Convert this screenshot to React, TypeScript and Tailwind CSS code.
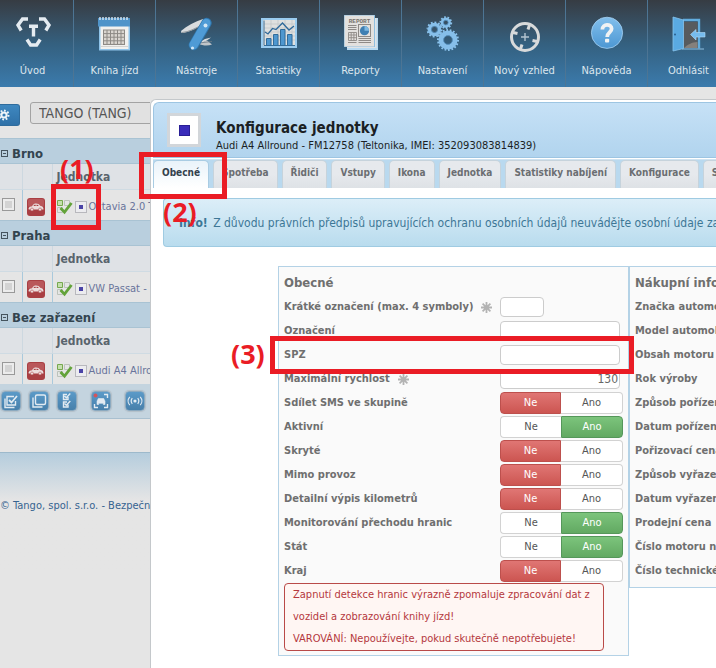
import React, { useState } from 'react';
import clsx from 'clsx';

//////////////////////////////////////////////////////
// NAV ICONS
//////////////////////////////////////////////////////

const NavSvg: React.FC<{ children: React.ReactNode }> = ({ children }) => (
  <svg width="40" height="40" viewBox="0 0 40 40" fill="none" aria-hidden="true">
    {children}
  </svg>
);

const HomeIcon = () => (
  <NavSvg>
    <g stroke="#e4ebf1" strokeWidth="3.4">
      <path d="M15 7H9.5L5 13.2L8.2 18.5" />
      <path d="M26 7H31.5L36 13.2L32.8 18.5" />
      <path d="M16 14.3H25M20.5 14V24.5" />
      <path d="M14 27.5L17.6 33H23.6L27.2 27.5" />
    </g>
  </NavSvg>
);

const CalendarIcon = () => (
  <NavSvg>
    <rect x="4" y="13" width="31" height="25.5" fill="#8fc4ea" />
    <rect x="5.5" y="14" width="28" height="23" fill="#f1f1ee" />
    <path d="M6 34.5H33" stroke="#d3d3d0" />
    <rect x="3" y="6" width="32" height="8.5" fill="#4f94c9" />
    <path d="M5 5V8M8 5V8M11 5V8M14 5V8M17 5V8M20 5V8M23 5V8M26 5V8M29 5V8M32 5V8" stroke="#d7e8f5" strokeWidth="1.4" />
    <rect x="8" y="17.5" width="22" height="15.5" fill="#8d8a85" />
    <g fill="#dad6d0">
      {[0, 1, 2, 3].map((r) =>
        [0, 1, 2, 3, 4, 5].map((c) => (
          <rect key={`${r}-${c}`} x={9 + c * 3.5} y={18.5 + r * 3.6} width="2.5" height="2.6" />
        )),
      )}
    </g>
  </NavSvg>
);

const KnifeIcon = () => (
  <NavSvg>
    <path d="M26 7C18 9.5 10 13.5 4 19L4.5 21C12 20.5 18 17 25 13Z" fill="#d9dcde" />
    <path d="M5 20.5C12 20 18 16.5 25 13" stroke="#8f979d" />
    <path d="M21 31C26 31 30 29 34 25.5L28 27Z" fill="#d5d9dc" />
    <path d="M21 31.5C26 34 31 34 35 32.5L30 28.5Z" fill="#bfc5c9" />
    <path d="M22 31L35 29.5" stroke="#6c7a85" strokeWidth=".8" />
    <path d="M16.8 33L29.5 11" stroke="#2f76ad" strokeWidth="10.4" strokeLinecap="round" />
    <path d="M16.6 33L29.3 11" stroke="#4f9bd6" strokeWidth="8.6" strokeLinecap="round" />
    <circle cx="28.5" cy="13.5" r="2" fill="#d3e7f5" />
    <circle cx="15.5" cy="36" r="1.6" fill="#d3e7f5" />
  </NavSvg>
);

const ChartIcon = () => (
  <NavSvg>
    <rect x="2" y="6" width="36" height="30" fill="#9accf0" />
    <rect x="4" y="8" width="32" height="26" fill="#dfe0df" />
    <path d="M5 12H36M5 16H36M5 20H36M5 24H36M5 28H36M12 8V34M19 8V34M26 8V34M33 8V34" stroke="#bfc3c5" strokeWidth=".7" />
    <path d="M5 8.5V33.5H36" stroke="#3d6f96" />
    <g fill="#4e97cf" stroke="#316c9b">
      <path d="M7.5 26.5H12V33.5H7.5ZM14.5 22.5H19V33.5H14.5ZM21.5 17.5H26V33.5H21.5ZM28.5 22.5H33V33.5H28.5Z" />
    </g>
    <path d="M6 20L9 22L13.5 16.5L17 17.5L23.5 11L30 18L35 14" stroke="#2f699a" strokeWidth="1.3" />
  </NavSvg>
);

const ReportIcon = () => (
  <NavSvg>
    <rect x="6" y="6" width="31" height="32" fill="#b7daf2" />
    <rect x="6" y="6" width="29.5" height="30" fill="#dfe3e6" />
    <rect x="3" y="3" width="31" height="32" fill="#8fbfe0" />
    <rect x="3.5" y="3.5" width="29.5" height="31" fill="#e3e1de" />
    <text x="18.5" y="10.5" textAnchor="middle" fontSize="6" fontWeight="bold" fill="#77736e" fontFamily="Liberation Mono, monospace">
      REPORT
    </text>
    <path d="M7 13.5H15.5M7 15.5H15.5M7 17.5H15.5M17.5 26.5H30M17.5 28.5H30M17.5 30.5H30M7 30.5H15.5" stroke="#8e8a86" />
    <rect x="17.5" y="12.5" width="12" height="12" stroke="#8e8a86" />
    <circle cx="23.5" cy="18.7" r="4.6" fill="#3f7fb2" />
    <path d="M23.5 18.7V14.1A4.6 4.6 0 0 1 28.1 18.7Z" fill="#7db8e2" />
    <path d="M7.5 20.5H15.5V28.5H7.5ZM7.5 23H15.5M7.5 25.7H15.5M10.2 20.5V28.5M12.9 20.5V28.5" stroke="#8e8a86" strokeWidth=".9" />
  </NavSvg>
);

const Gear: React.FC<{ x: number; y: number; r: number; teeth: number }> = ({ x, y, r, teeth }) => (
  <g>
    <circle cx={x} cy={y} r={r} stroke="#8cc4ee" strokeWidth="2" pathLength={teeth * 2} strokeDasharray="1 1" />
    <circle cx={x} cy={y} r={r * 0.7} stroke="#86bfea" strokeWidth={r * 0.5} />
    <circle cx={x} cy={y} r={r * 0.44} stroke="#5591bf" strokeWidth=".8" />
  </g>
);

const GearsIcon = () => (
  <NavSvg>
    <Gear x={11.5} y={17.5} r={7} teeth={12} />
    <Gear x={22.8} y={10.6} r={5.4} teeth={10} />
    <Gear x={25} y={28} r={10} teeth={18} />
  </NavSvg>
);

const TargetIcon = () => (
  <NavSvg>
    <circle cx="20" cy="25" r="13.5" stroke="#d8dadb" strokeWidth="3" />
    <path d="M8 20.5L12.5 21.5M24.5 13L23 17.5M32 29.5L27.5 28.5M15.5 37L17 32.5" stroke="#d8dadb" strokeWidth="3" />
    <path d="M16 25H24M20 21V29" stroke="#b4c4d0" strokeWidth="1.4" />
  </NavSvg>
);

const HelpIcon = () => (
  <NavSvg>
    <defs>
      <linearGradient id="help-fill" x1="0" y1="0" x2="0" y2="1">
        <stop offset="0" stopColor="#82bfec" />
        <stop offset="1" stopColor="#4c97d3" />
      </linearGradient>
    </defs>
    <circle cx="20" cy="20.8" r="15.6" fill="url(#help-fill)" stroke="#a4d1f2" strokeWidth=".8" />
    <path d="M15.4 17.5C15.4 11.5 24.6 11.5 24.6 16.8C24.6 20.6 20.2 20.4 20.2 25" stroke="#f0f2f3" strokeWidth="3.8" />
    <rect x="18" y="26.8" width="4.2" height="3.8" rx="1" fill="#f0f2f3" />
  </NavSvg>
);

const DoorIcon = () => (
  <NavSvg>
    <path d="M14 8H30V36.5" stroke="#62addf" strokeWidth="2.4" />
    <rect x="14" y="10" width="14.5" height="26" fill="#575b5f" />
    <path d="M15 36H28.5V30C23 30 18 33 15 36Z" fill="#85807c" />
    <path d="M13 37H35" stroke="#8fbfe0" />
    <path d="M4 5L14.5 8V36.5L4 39Z" fill="#5aaae2" stroke="#86c4ee" strokeWidth=".8" />
    <circle cx="6" cy="22.5" r="1" fill="#2a6190" />
    <path d="M21.5 22.5L27 17.5V20.5H36V25H27V28Z" fill="#76bcee" stroke="#b2dcf8" strokeWidth=".6" />
  </NavSvg>
);

const navItems = [
  { title: 'Úvod', Icon: HomeIcon },
  { title: 'Kniha jízd', Icon: CalendarIcon },
  { title: 'Nástroje', Icon: KnifeIcon },
  { title: 'Statistiky', Icon: ChartIcon },
  { title: 'Reporty', Icon: ReportIcon },
  { title: 'Nastavení', Icon: GearsIcon },
  { title: 'Nový vzhled', Icon: TargetIcon },
  { title: 'Nápověda', Icon: HelpIcon },
  { title: 'Odhlásit', Icon: DoorIcon },
];

const TopNav = () => (
  <nav className="overflow-hidden bg-linear-to-b from-[#363c43] via-[#34607f] to-[#3b7bad]">
    <ul className="-ml-2 flex">
      {navItems.map(({ title, Icon }) => (
        <li key={title} className="w-[82px] shrink-0 border-r border-[#4d7594]">
          <a href="#" className="flex flex-col items-center pt-3 pb-2 text-[11px] leading-4 whitespace-nowrap text-[#dce6ee]">
            <Icon />
            <span className="mt-[11px]">{title}</span>
          </a>
        </li>
      ))}
    </ul>
  </nav>
);

//////////////////////////////////////////////////////
// SIDEBAR
//////////////////////////////////////////////////////

const groups = [
  { name: 'Brno', unit: 'Octavia 2.0 TDI' },
  { name: 'Praha', unit: 'VW Passat - BUS' },
  { name: 'Bez zařazení', unit: 'Audi A4 Allround' },
];

const CarBadge = () => (
  <svg width="18" height="18" viewBox="0 0 18 18" className="block" aria-hidden="true">
    <rect width="18" height="18" rx="3" fill="#a93f43" />
    <rect x="1" y="1" width="16" height="8" rx="2" fill="#b9575a" />
    <path d="M1.5 10.8C1.8 8.6 4 8.6 5 8.2C6.5 6 7.5 5.5 9 5.5C11 5.5 12.3 6.3 13.5 8C15 8.2 16.6 8.6 16.5 11.6H1.8Z" fill="#ecdcdc" />
    <path d="M6.4 8L7.5 6.7H8.7V8ZM9.5 6.7C10.6 6.7 11.2 7.2 11.8 8H9.5Z" fill="#a93f43" />
    <circle cx="5" cy="11.5" r="1.5" fill="#ecdcdc" stroke="#a93f43" strokeWidth=".5" />
    <circle cx="13" cy="11.5" r="1.5" fill="#ecdcdc" stroke="#a93f43" strokeWidth=".5" />
  </svg>
);

const CheckGrid = () => (
  <svg width="16" height="16" viewBox="0 0 16 16" className="shrink-0" fill="none" aria-hidden="true">
    <path d="M.5 1.5H5.5V6.5H.5Z" fill="#c5dfae" stroke="#76a84e" />
    <path d="M7.5 1.5H12.5V6.5H7.5ZM.5 8.5H5.5V13.5H.5Z" stroke="#bcc3bb" />
    <path d="M3.5 9L7.5 13.2L14.5 4" stroke="#63a33a" strokeWidth="2.8" />
  </svg>
);

const UnitMarker = () => (
  <span className="flex size-3 shrink-0 items-center justify-center border border-[#b8b8bd] bg-[#ececef]">
    <span className="size-1 bg-[#4a43a6]" />
  </span>
);

const UnitGroup: React.FC<{ name: string; unit: string }> = ({ name, unit }) => (
  <section>
    <h2 className="flex h-[26px] items-center gap-1 border-y border-[#a9c3d3] bg-[#b9cfde] pt-1.5 text-[13px] font-bold text-[#33444f]">
      <button aria-label={`Sbalit ${name}`} className="mb-0.5 ml-px flex size-[7px] items-center justify-center border border-[#45545e]">
        <span className="h-px w-[3px] bg-[#45545e]" />
      </button>
      {name}
    </h2>
    <table className="w-full table-fixed border-collapse text-left text-[11px]">
      <thead>
        <tr className="h-[25px] bg-[#dfe2e6] text-[12px] text-[#59646d]">
          <th className="w-[22px] border-r border-[#cdd8e0]" />
          <th className="w-[30px] border-r border-[#cdd8e0]" />
          <th className="p-0 pt-0.5 pl-1 font-bold">Jednotka</th>
        </tr>
      </thead>
      <tbody>
        <tr className="h-[31px] border-t border-[#cfdbe3] text-[#69749b]">
          <td className="border-r border-[#a9c9dc] p-0">
            <input
              type="checkbox"
              aria-label={unit}
              className="ml-0.5 block size-[13px] appearance-none border border-[#999] bg-[#d3d3d3] shadow-[inset_0_0_0_2px_#ececec] checked:bg-[#4a43a6]"
            />
          </td>
          <td className="border-r border-[#a9c9dc] p-0 pt-1 pl-1">
            <CarBadge />
          </td>
          <td className="p-0 pt-1 pl-1">
            <a href="#" className="flex items-center gap-0.5 whitespace-nowrap">
              <CheckGrid />
              <UnitMarker />
              {unit}
            </a>
          </td>
        </tr>
      </tbody>
    </table>
  </section>
);

const ToolButton: React.FC<{ label: string; children: React.ReactNode }> = ({ label, children }) => (
  <button
    aria-label={label}
    className="flex size-5 items-center justify-center rounded-[4px] border border-[#8ba9bf] bg-linear-to-b from-[#5b9ac8] to-[#4780ab] shadow-[0_0_1px_1px_#b3bfc8]">
    <svg width="18" height="18" viewBox="0 0 18 18" fill="none" stroke="#e2ebf2" strokeWidth="1.4" aria-hidden="true">
      {children}
    </svg>
  </button>
);

const Toolbar = () => (
  <div className="flex h-[35px] items-center border-b border-[#a9c0d0] bg-[#c4d4df]">
    <div className="ml-px flex gap-2">
      <ToolButton label="Vybrat vše">
        <path d="M13.5 9V13H5V4.5H12M3 6.5V15.5H12.5" />
        <path d="M7 8L9.5 10.5L15 4" strokeWidth="1.8" />
      </ToolButton>
      <ToolButton label="Zrušit výběr">
        <rect x="5.5" y="3" width="10" height="9.5" rx="1.5" />
        <path d="M3 5.5V15H12.5" />
      </ToolButton>
      <ToolButton label="Obrátit výběr">
        <path d="M10 5V7.5H5.5V2.5H9M10 12.5V15H5.5V10H9M6.5 4L8.3 5.8L12.3 1.5M6.5 11.5L8.3 13.3L12.3 9" />
      </ToolButton>
    </div>
    <div className="ml-3.5 flex gap-3.5">
      <ToolButton label="Sledovat vozidlo">
        <path d="M12 2.5H15.5V6M15.5 12V15.5H12M6 15.5H2.5V12" />
        <path d="M5 12.5V9.2L6.3 6.5H11.7L13 9.2V12.5H11.3V11.3H6.7V12.5ZM5.5 9.2H12.5" fill="#e2ebf2" strokeWidth=".6" />
        <circle cx="3.5" cy="3.5" r="2" fill="#d2555b" stroke="none" />
      </ToolButton>
      <ToolButton label="Signál">
        <circle cx="9" cy="9" r="1.6" fill="#e2ebf2" stroke="none" />
        <path d="M6.3 6.2C5 7.8 5 10.2 6.3 11.8M11.7 6.2C13 7.8 13 10.2 11.7 11.8M3.8 4.8C1.6 7.2 1.6 10.8 3.8 13.2M14.2 4.8C16.4 7.2 16.4 10.8 14.2 13.2" strokeWidth="1.2" />
      </ToolButton>
    </div>
  </div>
);

const Sidebar = () => (
  <aside className="w-[150px] shrink-0 overflow-hidden">
    <div className="flex h-[51px] items-start pt-[15px]">
      <button aria-label="Nastavení seznamu" className="mt-0.5 h-[22px] w-5 shrink-0 rounded-r-[3px] border border-l-0 border-[#2f6c9d] bg-linear-to-b from-[#3f88c0] to-[#2f71a8]">
        <svg width="12" height="12" viewBox="0 0 12 12" className="-ml-0.5" fill="none" stroke="#eef4f8" aria-hidden="true">
          <circle cx="6" cy="6" r="2.6" strokeWidth="2" />
          <circle cx="6" cy="6" r="4.5" strokeWidth="2" pathLength={32} strokeDasharray="2 2" />
        </svg>
      </button>
      <select
        aria-label="Skupina"
        className="ml-2.5 h-[22px] w-40 shrink-0 appearance-none rounded-[3px] border border-[#a3a3a3] bg-[#e1e1e1] pl-2 text-[14px] leading-5 text-[#555]">
        <option>TANGO (TANG)</option>
      </select>
    </div>
    {groups.map((group) => (
      <UnitGroup key={group.name} {...group} />
    ))}
    <Toolbar />
    <footer className="mt-[33px] h-[120px] border-t border-[#9db9cb] bg-linear-to-b from-[#b5cddd] to-[#e5e5e5] to-40% pt-[45px] text-[11px] leading-4 whitespace-nowrap text-[#366390]">
      © Tango, spol. s.r.o. - Bezpečnost
    </footer>
  </aside>
);

//////////////////////////////////////////////////////
// UNIT CONFIGURATION
//////////////////////////////////////////////////////

const tabs = ['Obecné', 'Spotřeba', 'Řidiči', 'Vstupy', 'Ikona', 'Jednotka', 'Statistiky nabíjení', 'Konfigurace', 'Servis'];

type Field = { label: string; required?: boolean } & (
  | { kind: 'text'; value?: string; short?: boolean }
  | { kind: 'toggle'; on: boolean }
);

const fields: Field[] = [
  { label: 'Krátké označení (max. 4 symboly)', kind: 'text', required: true, short: true },
  { label: 'Označení', kind: 'text' },
  { label: 'SPZ', kind: 'text' },
  { label: 'Maximální rychlost', kind: 'text', required: true, value: '130' },
  { label: 'Sdílet SMS ve skupině', kind: 'toggle', on: false },
  { label: 'Aktivní', kind: 'toggle', on: true },
  { label: 'Skryté', kind: 'toggle', on: false },
  { label: 'Mimo provoz', kind: 'toggle', on: false },
  { label: 'Detailní výpis kilometrů', kind: 'toggle', on: false },
  { label: 'Monitorování přechodu hranic', kind: 'toggle', on: true },
  { label: 'Stát', kind: 'toggle', on: true },
  { label: 'Kraj', kind: 'toggle', on: false },
];

const purchaseLabels = [
  'Značka automobilu',
  'Model automobilu',
  'Obsah motoru',
  'Rok výroby',
  'Způsob pořízení',
  'Datum pořízení',
  'Pořizovací cena',
  'Způsob vyřazení',
  'Datum vyřazení',
  'Prodejní cena',
  'Číslo motoru nové',
  'Číslo technického průkazu',
];

const RequiredMark = () => (
  <svg width="11" height="11" viewBox="0 0 11 11" className="ml-2 shrink-0" stroke="#b3b3b3" strokeWidth="1.8" aria-hidden="true">
    <path d="M5.5 0V11M0 5.5H11M1.6 1.6L9.4 9.4M9.4 1.6L1.6 9.4" />
  </svg>
);

const Toggle: React.FC<{ id: string; initial: boolean }> = ({ id, initial }) => {
  const [on, setOn] = useState(initial);

  return (
    <div role="group" aria-labelledby={id} className="flex w-[123px] text-[11px] leading-5 font-normal">
      <button
        onClick={() => setOn(false)}
        aria-pressed={!on}
        className={clsx(
          'w-[61px] rounded-l-[4px] border',
          on ? 'border-r-0 border-[#d2d2d2] bg-white text-[#555]' : 'border-[#bd504d] bg-linear-to-b from-[#e07674] to-[#cc5551] text-white',
        )}>
        Ne
      </button>
      <button
        onClick={() => setOn(true)}
        aria-pressed={on}
        className={clsx(
          'w-[62px] rounded-r-[4px] border',
          on ? 'border-[#55975a] bg-linear-to-b from-[#7cc47c] to-[#62a962] text-white' : 'border-l-0 border-[#d2d2d2] bg-white text-[#555]',
        )}>
        Ano
      </button>
    </div>
  );
};

const FieldRow: React.FC<{ field: Field; index: number }> = ({ field, index }) => {
  const id = `field-${index}`;

  return (
    <div className="flex h-6 items-center">
      {field.kind === 'text' ? (
        <label htmlFor={id} className="flex w-[216px] items-center">
          {field.label}
          {field.required && <RequiredMark />}
        </label>
      ) : (
        <span id={id} className="w-[216px]">
          {field.label}
        </span>
      )}
      {field.kind === 'text' ? (
        <input
          id={id}
          type="text"
          defaultValue={field.value}
          className={clsx(
            'h-5 rounded-[4px] border border-[#cccccc] bg-white px-px text-right text-[12px] font-normal text-[#666]',
            field.short ? 'w-11' : 'w-[120px]',
          )}
        />
      ) : (
        <Toggle id={id} initial={field.on} />
      )}
    </div>
  );
};

const Dialog = () => {
  const [active, setActive] = useState('Obecné');

  return (
    <main className="mt-3 min-w-0 flex-1 overflow-hidden rounded-tl-[6px] border-t border-l border-[#c4c8cb] bg-white pt-0.5 pl-0.5 whitespace-nowrap">
      <header className="flex h-[56px] items-start rounded-tl-[6px] border border-r-0 border-[#9dc5e2] bg-linear-to-b from-[#c6e1f6] to-[#b1d4ee] pt-2.5 pl-[13px]">
        <div className="flex size-[34px] items-center justify-center border-[3px] border-[#d2d6da] bg-white">
          <span className="size-[11px] border border-[#2a1f96] bg-[#3a2dba]" />
        </div>
        <div className="pt-[5px] pl-[15px] text-[#1b1f24]">
          <h1 className="text-[15px] leading-5 font-bold">Konfigurace jednotky</h1>
          <p className="text-[11px] leading-4">Audi A4 Allround - FM12758 (Teltonika, IMEI: 352093083814839)</p>
        </div>
      </header>

      <div role="tablist" className="mt-px flex h-[29px] gap-1 border-t border-[#cfe3f1] bg-[#b9d9ef]">
        {tabs.map((tab) => (
          <button
            key={tab}
            role="tab"
            aria-selected={tab === active}
            onClick={() => setActive(tab)}
            className={clsx(
              'shrink-0 rounded-t-[5px] border border-b-0 px-2 pb-1 text-[10px] font-bold',
              tab === active
                ? 'border-[#a9cce3] bg-linear-to-b from-[#e9f3fa] to-white text-[#33414c]'
                : 'border-[#c6d3dc] bg-linear-to-b from-[#e6e9ed] from-50% to-[#dee2e6] text-[#6b6e72]',
            )}>
            {tab}
          </button>
        ))}
      </div>

      <div className="mt-2.5 ml-2.5 h-[49px] rounded-l-[4px] border border-r-0 border-[#9fcbe2] bg-linear-to-b from-[#dceef8] to-[#b9dcee] pl-[15px] text-[12px] leading-[48px] text-[#3d7796]">
        <strong className="mr-0.5">Info!</strong> Z důvodu právních předpisů upravujících ochranu osobních údajů neuvádějte osobní údaje zaměstnanců
      </div>

      <div className="mt-[19px] ml-[125px] flex items-start text-[11px] font-bold text-[#6f6f6f]">
        <section className="w-[351px] shrink-0 border border-[#b4d2e6] bg-[#fafafa] px-[5px] pt-1 pb-1">
          <h2 className="h-6 text-[13px] leading-6">Obecné</h2>
          {fields.map((field, index) => (
            <FieldRow key={field.label} field={field} index={index} />
          ))}
          <p className="w-80 rounded-[4px] border border-[#b94a48] bg-[#fff6f3] px-2 text-[11px] leading-[22px] font-normal whitespace-normal text-[#b5383d]">
            Zapnutí detekce hranic výrazně zpomaluje zpracování dat z vozidel a zobrazování knihy jízd!
            <br />
            VAROVÁNÍ: Nepoužívejte, pokud skutečně nepotřebujete!
          </p>
        </section>
        <section className="w-[351px] shrink-0 border border-[#b4d2e6] bg-[#fafafa] px-[5px] pt-1 pb-1">
          <h2 className="h-6 text-[13px] leading-6">Nákupní informace</h2>
          {purchaseLabels.map((label) => (
            <div key={label} className="h-6 leading-6">
              {label}
            </div>
          ))}
        </section>
      </div>
    </main>
  );
};

//////////////////////////////////////////////////////
// TUTORIAL MARKS
//////////////////////////////////////////////////////

const Marks = () => (
  <div className="pointer-events-none font-['Open_Sans',sans-serif] text-[27px] leading-7 font-bold text-[#ea1c25]">
    <span className="absolute top-[184px] left-[51px] h-[46px] w-[50px] border-5 border-[#ea1c25]" />
    <span className="absolute top-[155px] left-[60px]">(1)</span>
    <span className="absolute top-[152px] left-[139px] h-[47px] w-[88px] border-5 border-[#ea1c25]" />
    <span className="absolute top-[198px] left-[163px]">(2)</span>
    <span className="absolute top-[336px] left-[270px] h-[38px] w-[364px] border-5 border-[#ea1c25]" />
    <span className="absolute top-[340px] left-[231px]">(3)</span>
  </div>
);

const App = () => (
  <div className="relative flex min-h-screen flex-col overflow-hidden bg-[#e5e5e5] font-['Tahoma','DejaVu_Sans_Condensed','DejaVu_Sans',sans-serif]">
    <TopNav />
    <div className="flex flex-1">
      <Sidebar />
      <Dialog />
    </div>
    <Marks />
  </div>
);

export default App;
